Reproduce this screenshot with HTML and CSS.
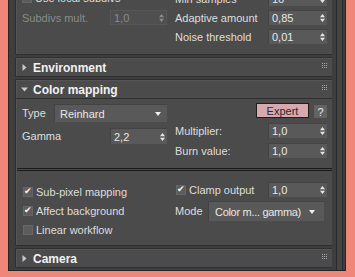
FILE: index.html
```html
<!DOCTYPE html>
<html>
<head>
<meta charset="utf-8">
<link rel="stylesheet" href="styles.css">
</head>
<body>
<div class="frame">
  <div class="scroll">
    <div class="stack">
      <section class="rollout">
        <div class="body top-body">
          <div class="col col-left">
            <div class="row"><span class="cb"></span><span class="lbl">Use local subdivs</span></div>
            <div class="row"><span class="lbl dis">Subdivs mult.</span><span class="spin dis sw-left"><span class="val">1,0</span><svg class="arr" width="5" height="8" viewBox="0 0 5 8"><path d="M0 3.2L2.5 0 5 3.2Z M0 4.8L5 4.8 2.5 8Z"/></svg></span></div>
          </div>
          <div class="col col-right">
            <div class="row"><span class="lbl">Min samples</span><span class="spin sw"><span class="val">16</span><svg class="arr" width="5" height="8" viewBox="0 0 5 8"><path d="M0 3.2L2.5 0 5 3.2Z M0 4.8L5 4.8 2.5 8Z"/></svg></span></div>
            <div class="row"><span class="lbl">Adaptive amount</span><span class="spin sw"><span class="val">0,85</span><svg class="arr" width="5" height="8" viewBox="0 0 5 8"><path d="M0 3.2L2.5 0 5 3.2Z M0 4.8L5 4.8 2.5 8Z"/></svg></span></div>
            <div class="row"><span class="lbl">Noise threshold</span><span class="spin sw"><span class="val">0,01</span><svg class="arr" width="5" height="8" viewBox="0 0 5 8"><path d="M0 3.2L2.5 0 5 3.2Z M0 4.8L5 4.8 2.5 8Z"/></svg></span></div>
          </div>
        </div>
      </section>

      <section class="rollout">
        <div class="head">
          <svg class="tri" width="5" height="7" viewBox="0 0 5 7"><path d="M0.5 0L4.5 3.5 0.5 7Z"/></svg>
          <span class="title">Environment</span>
          <svg class="grip" width="5" height="5" viewBox="0 0 5 5"><path d="M0 0h1v1H0z M2 0h1v1H2z M4 0h1v1H4z M0 2h1v1H0z M2 2h1v1H2z M4 2h1v1H4z M0 4h1v1H0z M2 4h1v1H2z M4 4h1v1H4z"/></svg>
        </div>
      </section>

      <section class="rollout">
        <div class="head">
          <svg class="tri down" width="7" height="5" viewBox="0 0 7 5"><path d="M0 0.5L7 0.5 3.5 4.5Z"/></svg>
          <span class="title">Color mapping</span>
          <svg class="grip" width="5" height="5" viewBox="0 0 5 5"><path d="M0 0h1v1H0z M2 0h1v1H2z M4 0h1v1H4z M0 2h1v1H0z M2 2h1v1H2z M4 2h1v1H4z M0 4h1v1H0z M2 4h1v1H2z M4 4h1v1H4z"/></svg>
        </div>
        <div class="body cm-body">
          <div class="cm-upper">
            <div class="col col-left cm-left">
              <div class="row"><span class="lbl">Type</span><span class="drop type-drop"><span class="val">Reinhard</span><svg class="darr" width="6" height="4" viewBox="0 0 6 4"><path d="M0 0L6 0 3 4Z"/></svg></span></div>
              <div class="row"><span class="lbl">Gamma</span><span class="spin sw-left"><span class="val">2,2</span><svg class="arr" width="5" height="8" viewBox="0 0 5 8"><path d="M0 3.2L2.5 0 5 3.2Z M0 4.8L5 4.8 2.5 8Z"/></svg></span></div>
            </div>
            <div class="col col-right cm-right">
              <div class="row btn-row"><span class="btn-expert">Expert</span><span class="btn-q">?</span></div>
              <div class="row"><span class="lbl">Multiplier:</span><span class="spin sw"><span class="val">1,0</span><svg class="arr" width="5" height="8" viewBox="0 0 5 8"><path d="M0 3.2L2.5 0 5 3.2Z M0 4.8L5 4.8 2.5 8Z"/></svg></span></div>
              <div class="row"><span class="lbl">Burn value:</span><span class="spin sw"><span class="val">1,0</span><svg class="arr" width="5" height="8" viewBox="0 0 5 8"><path d="M0 3.2L2.5 0 5 3.2Z M0 4.8L5 4.8 2.5 8Z"/></svg></span></div>
            </div>
          </div>
          <div class="sep"></div>
          <div class="cm-lower">
            <div class="col col-left low-left">
              <div class="row chk"><span class="cb on">✔</span><span class="lbl">Sub-pixel mapping</span></div>
              <div class="row chk"><span class="cb on">✔</span><span class="lbl">Affect background</span></div>
              <div class="row chk"><span class="cb"></span><span class="lbl">Linear workflow</span></div>
            </div>
            <div class="col col-right low-right">
              <div class="row"><span class="cbl"><span class="cb on">✔</span><span class="lbl">Clamp output</span></span><span class="spin sw"><span class="val">1,0</span><svg class="arr" width="5" height="8" viewBox="0 0 5 8"><path d="M0 3.2L2.5 0 5 3.2Z M0 4.8L5 4.8 2.5 8Z"/></svg></span></div>
              <div class="row mode-row"><span class="lbl">Mode</span><span class="drop mode-drop"><span class="val">Color m... gamma)</span><svg class="darr" width="6" height="4" viewBox="0 0 6 4"><path d="M0 0L6 0 3 4Z"/></svg></span></div>
            </div>
          </div>
        </div>
      </section>

      <section class="rollout">
        <div class="head">
          <svg class="tri" width="5" height="7" viewBox="0 0 5 7"><path d="M0.5 0L4.5 3.5 0.5 7Z"/></svg>
          <span class="title">Camera</span>
          <svg class="grip" width="5" height="5" viewBox="0 0 5 5"><path d="M0 0h1v1H0z M2 0h1v1H2z M4 0h1v1H4z M0 2h1v1H0z M2 2h1v1H2z M4 2h1v1H4z M0 4h1v1H0z M2 4h1v1H2z M4 4h1v1H4z"/></svg>
        </div>
      </section>
    </div>
  </div>
  <div class="scrollbar"><div class="track"></div></div>
</div>
</body>
</html>
```

FILE: styles.css
```css
html, body {
  margin: 0;
  padding: 0;
}
body {
  background: #ef8677;
  width: 355px;
  height: 277px;
  overflow: hidden;
  font-family: "Liberation Sans", Arial, sans-serif;
  font-size: 11px;
  color: #dedede;
}
.frame {
  margin-left: 8px;
  width: 336px;
  height: 270px;
  background: #3e3e3e;
  border: 1px solid #262626;
  border-top: none;
  display: flex;
  overflow: hidden;
}
.scroll {
  width: 325px;
  padding-left: 6px;
  overflow: hidden;
}
.stack {
  margin-top: -10px;
  display: flex;
  flex-direction: column;
  gap: 2px;
  width: 319px;
}
.rollout {
  background: #4b4b4b;
  border: 1px solid #2f2f2f;
  box-shadow: inset 1px 1px 0 #555;
}
.head {
  height: 18px;
  display: flex;
  align-items: center;
  padding: 0 6px;
  gap: 6px;
}
.tri {
  fill: #c8c8c8;
  width: 5px;
}
.tri.down {
  width: 7px;
  margin-left: -1px;
  margin-right: -1px;
}
.title {
  font-weight: bold;
  font-size: 12px;
  color: #f2f2f2;
  flex: 1;
  padding-top: 1px;
}
.grip {
  fill: #a8a8a8;
  margin-bottom: 3px;
}
.head + .body {
  border-top: 1px solid #2f2f2f;
}
.top-body {
  display: flex;
  padding-bottom: 10px;
}
.col {
  display: flex;
  flex-direction: column;
}
.col-left {
  width: 153px;
  padding-left: 6px;
}
.col-right {
  width: 152px;
}
.top-body .col-left {
  gap: 5px;
}
.top-body .col-right {
  gap: 4px;
}
.row {
  display: flex;
  align-items: center;
  justify-content: space-between;
  height: 15px;
}
.lbl {
  white-space: nowrap;
}
.dis {
  color: #8a8a8a;
}
.spin {
  height: 15px;
  box-sizing: border-box;
  background: #595959;
  border-top: 1px solid #434343;
  border-left: 1px solid #434343;
  display: flex;
  align-items: center;
  justify-content: space-between;
  padding: 0 2px 0 3px;
  font-size: 11px;
  color: #e8e8e8;
}
.spin.dis {
  background: #4f4f4f;
  color: #8a8a8a;
  border: 1px solid #575757;
}
.spin.dis .arr { fill: #8a8a8a; }
.arr {
  fill: #e6e6e6;
}
.sw {
  width: 59px;
}
.sw-left {
  width: 57px;
  margin-right: 8px;
}
.cb {
  width: 10px;
  height: 10px;
  box-sizing: border-box;
  background: #5c5c5c;
  border: 1px solid #666;
  display: inline-flex;
  align-items: center;
  justify-content: center;
  font-size: 9px;
  line-height: 1;
  color: #f4f4f4;
  margin-right: 3px;
  flex: none;
}
.top-body .col-left .row:first-child {
  justify-content: flex-start;
  margin-top: -1px;
}
.cm-upper {
  display: flex;
  padding-top: 5px;
  height: 64px;
}
.cm-left {
  gap: 6px;
}
.cm-left .row:first-child {
  height: 18px;
}
.cm-left .row:last-child {
  height: 16px;
}
.cm-left .spin { height: 16px; }
.cm-right {
  gap: 5px;
}
.drop {
  height: 18px;
  box-sizing: border-box;
  background: #595959;
  border-top: 1px solid #434343;
  border-left: 1px solid #434343;
  display: flex;
  align-items: center;
  justify-content: space-between;
  padding: 0 6px 0 5px;
  font-size: 11px;
  color: #e8e8e8;
  white-space: nowrap;
}
.darr { fill: #f0f0f0; flex: none; }
.type-drop {
  width: 113px;
  margin-right: 8px;
}
.btn-row {
  justify-content: flex-end;
  gap: 5px;
  margin-top: -1px;
}
.btn-expert {
  width: 53px;
  height: 15px;
  box-sizing: border-box;
  background: #d7a8ae;
  border: 1px solid #1e1e1e;
  color: #2a2a2a;
  font-size: 11px;
  display: flex;
  align-items: center;
  justify-content: center;
}
.btn-q {
  width: 13px;
  height: 13px;
  margin-top: 2px;
  box-sizing: border-box;
  background: #636363;
  color: #e8e8e8;
  font-size: 11px;
  display: flex;
  align-items: center;
  justify-content: center;
}
.sep {
  margin: 0 1px;
  height: 1px;
  border-top: 1px solid #1a1a1a;
  border-bottom: 1px solid #1a1a1a;
  background: #4b4b4b;
}
.cm-lower {
  display: flex;
  padding-top: 11px;
  padding-bottom: 8px;
}
.low-left {
  gap: 4px;
  padding-left: 7px;
  width: 152px;
  padding-top: 2px;
}
.chk {
  justify-content: flex-start;
}
.low-right {
  gap: 4px;
}
.cbl {
  display: flex;
  align-items: center;
}
.cbl .cb { margin-left: 1px; }
.mode-row {
  height: 20px;
}
.mode-drop {
  width: 116px;
  height: 20px;
  margin-right: 3px;
  padding-left: 6px;
  padding-right: 9px;
  letter-spacing: -0.3px;
}
.scrollbar {
  width: 11px;
  display: flex;
  justify-content: center;
  padding-left: 2px;
}
.track {
  width: 5px;
  border-left: 1px solid #2a2a2a;
  border-right: 1px solid #2a2a2a;
  background: #444;
}
```
